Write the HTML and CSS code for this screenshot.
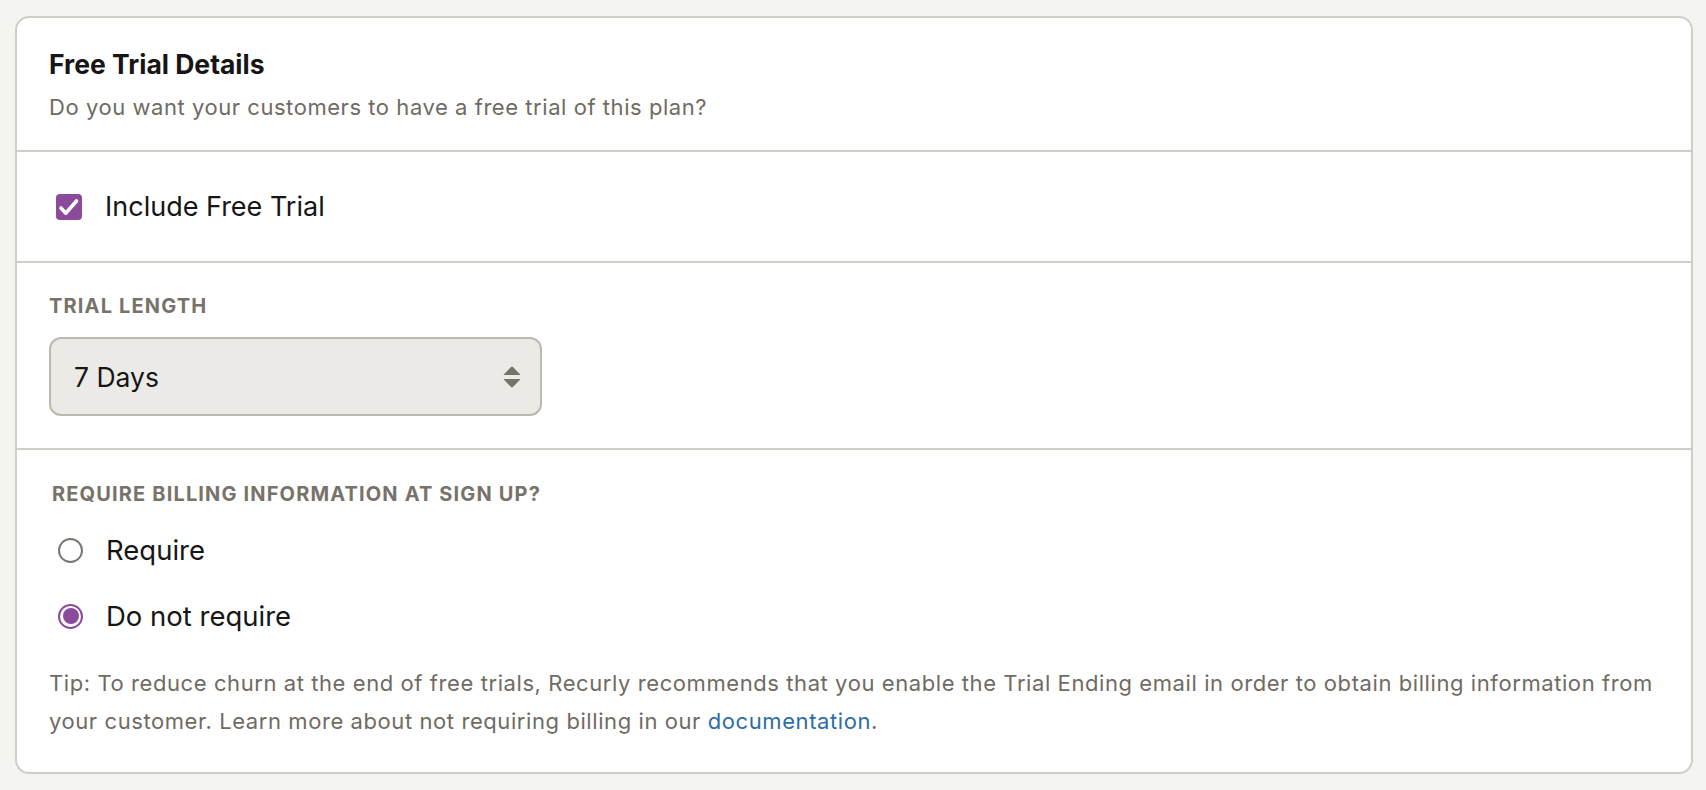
FILE: index.html
```html
<!DOCTYPE html>
<html lang="en">
<head>
<meta charset="utf-8">
<title>Free Trial Details</title>
<link rel="stylesheet" href="styles.css">
</head>
<body>
<div class="card">
  <section class="section head">
    <h2 class="title">Free Trial Details</h2>
    <p class="subtitle">Do you want your customers to have a free trial of this plan?</p>
  </section>
  <section class="section check-section">
    <label class="check-row">
      <span class="checkbox">
        <svg viewBox="0 0 26 26" width="26" height="26"><path d="M5 14l4.8 5.2L20.5 7" fill="none" stroke="#fff" stroke-width="3.6" stroke-linecap="round" stroke-linejoin="round"/></svg>
      </span>
      <span class="check-label">Include Free Trial</span>
    </label>
  </section>
  <section class="section length-section">
    <div class="field-label">Trial Length</div>
    <div class="select">
      <span class="select-value">7 Days</span>
      <svg class="select-arrows" viewBox="0 0 18 22" width="18" height="22"><path d="M7.8 1.2Q9 0 10.2 1.2L17 8.2Q17.8 9 16.6 9H1.4Q0.2 9 1 8.2Z" fill="#77736a"/><path d="M1.4 13H16.6Q17.8 13 17 13.8L10.2 20.8Q9 22 7.8 20.8L1 13.8Q0.2 13 1.4 13Z" fill="#77736a"/></svg>
    </div>
  </section>
  <section class="section billing-section">
    <div class="field-label billing-label">Require billing information at sign up?</div>
    <div class="radios">
      <label class="radio-row"><span class="radio"></span><span class="radio-label">Require</span></label>
      <label class="radio-row"><span class="radio checked"></span><span class="radio-label">Do not require</span></label>
    </div>
    <p class="tip">Tip: To reduce churn at the end of free trials, Recurly recommends that you enable the Trial Ending email in order to obtain billing information from your customer. Learn more about not requiring billing in our <a class="link" href="#">documentation</a>.</p>
  </section>
</div>
</body>
</html>
```

FILE: styles.css
```css
* { box-sizing: border-box; }
html, body { margin: 0; }
body {
  background: #f4f4f0;
  padding: 16px 13px 16px 15px;
  font-family: Inter, "Noto Sans", sans-serif;
  color: #161616;
}
.card {
  background: #fff;
  border: 2px solid #d1cec7;
  border-radius: 14px;
}
.section {
  padding: 0 32px;
  border-bottom: 2px solid #d1cec7;
}
.section:last-child { border-bottom: none; }

.head { padding-top: 31px; padding-bottom: 29px; }
.title {
  margin: 0;
  font-size: 26.5px;
  line-height: 30px;
  font-weight: 700;
  color: #161616;
}
.subtitle {
  margin: 14px 0 0;
  font-size: 22px;
  line-height: 28px;
  letter-spacing: 0.55px;
  color: #6f6b63;
}

.check-section { padding-top: 40px; padding-bottom: 40px; }
.check-row { display: flex; align-items: center; gap: 23px; padding-left: 7px; }
.checkbox {
  width: 26px; height: 26px;
  border-radius: 4px;
  background: #8b4a9c;
  display: flex; align-items: center; justify-content: center;
}
.check-label { font-size: 27px; line-height: 29px; color: #161616; }

.length-section { padding-top: 31px; padding-bottom: 32px; }
.field-label {
  font-size: 20px;
  line-height: 24px;
  font-weight: 700;
  letter-spacing: 1.15px;
  text-transform: uppercase;
  color: #77736a;
}
.select {
  margin-top: 19px;
  width: 493px;
  height: 79px;
  border: 2px solid #bcb9b0;
  border-radius: 12px;
  background: #ebeae6;
  display: flex;
  align-items: center;
  justify-content: space-between;
  padding: 0 19px 0 23px;
}
.select-value { font-size: 26.5px; color: #161616; }

.billing-section { padding-top: 32px; padding-bottom: 32px; }
.billing-label { padding-left: 3px; }
.radios { display: flex; flex-direction: column; gap: 30px; margin-top: 26px; padding-left: 9px; }
.radio-row { display: flex; align-items: center; gap: 23px; height: 36px; }
.radio {
  width: 25px; height: 25px;
  border-radius: 50%;
  border: 2px solid #7a7772;
  background: #fff;
  position: relative;
}
.radio.checked { border-color: #8b4a9c; }
.radio.checked::after {
  content: "";
  position: absolute;
  left: 2.5px; top: 2.5px;
  width: 16px; height: 16px;
  border-radius: 50%;
  background: #8b4a9c;
}
.radio-label { font-size: 27.5px; color: #161616; }
.tip {
  margin: 30px 0 0;
  max-width: 1630px;
  font-size: 22px;
  line-height: 38px;
  letter-spacing: 0.58px;
  color: #6f6b63;
}
.link { color: #2e6da4; text-decoration: none; }
```
